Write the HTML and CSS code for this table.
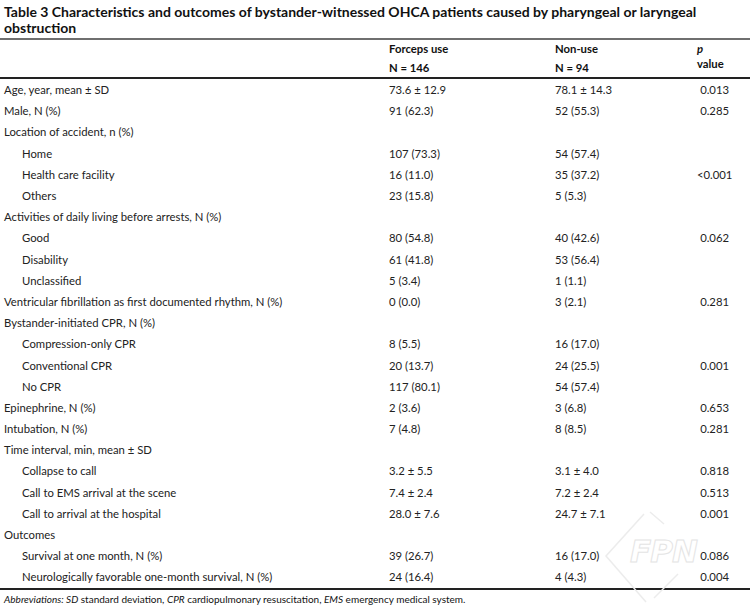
FILE: index.html
```html
<!DOCTYPE html>
<html>
<head>
<meta charset="utf-8">
<link rel="stylesheet" href="styles.css">
</head>
<body>
<div class="page">
  <h1 class="title">Table 3 Characteristics and outcomes of bystander-witnessed OHCA patients caused by pharyngeal or laryngeal obstruction</h1>
  <table class="tbl">
    <colgroup>
      <col class="c-label"><col class="c-f"><col class="c-n"><col class="c-p">
    </colgroup>
    <thead>
      <tr class="h1">
        <th></th>
        <th>Forceps use</th>
        <th>Non-use</th>
        <th rowspan="2" class="ph"><i>p</i><br>value</th>
      </tr>
      <tr class="h2">
        <th></th>
        <th>N = 146</th>
        <th>N = 94</th>
      </tr>
    </thead>
    <tbody>
      <tr><td>Age, year, mean ± SD</td><td>73.6 ± 12.9</td><td>78.1 ± 14.3</td><td class="pv">0.013</td></tr>
      <tr><td>Male, N (%)</td><td>91 (62.3)</td><td>52 (55.3)</td><td class="pv">0.285</td></tr>
      <tr><td>Location of accident, n (%)</td><td></td><td></td><td></td></tr>
      <tr><td class="ind">Home</td><td>107 (73.3)</td><td>54 (57.4)</td><td></td></tr>
      <tr><td class="ind">Health care facility</td><td>16 (11.0)</td><td>35 (37.2)</td><td class="pv">&lt;0.001</td></tr>
      <tr><td class="ind">Others</td><td>23 (15.8)</td><td>5 (5.3)</td><td></td></tr>
      <tr><td>Activities of daily living before arrests, N (%)</td><td></td><td></td><td></td></tr>
      <tr><td class="ind">Good</td><td>80 (54.8)</td><td>40 (42.6)</td><td class="pv">0.062</td></tr>
      <tr><td class="ind">Disability</td><td>61 (41.8)</td><td>53 (56.4)</td><td></td></tr>
      <tr><td class="ind">Unclassified</td><td>5 (3.4)</td><td>1 (1.1)</td><td></td></tr>
      <tr><td>Ventricular fibrillation as first documented rhythm, N (%)</td><td>0 (0.0)</td><td>3 (2.1)</td><td class="pv">0.281</td></tr>
      <tr><td>Bystander-initiated CPR, N (%)</td><td></td><td></td><td></td></tr>
      <tr><td class="ind">Compression-only CPR</td><td>8 (5.5)</td><td>16 (17.0)</td><td></td></tr>
      <tr><td class="ind">Conventional CPR</td><td>20 (13.7)</td><td>24 (25.5)</td><td class="pv">0.001</td></tr>
      <tr><td class="ind">No CPR</td><td>117 (80.1)</td><td>54 (57.4)</td><td></td></tr>
      <tr><td>Epinephrine, N (%)</td><td>2 (3.6)</td><td>3 (6.8)</td><td class="pv">0.653</td></tr>
      <tr><td>Intubation, N (%)</td><td>7 (4.8)</td><td>8 (8.5)</td><td class="pv">0.281</td></tr>
      <tr><td>Time interval, min, mean ± SD</td><td></td><td></td><td></td></tr>
      <tr><td class="ind">Collapse to call</td><td>3.2 ± 5.5</td><td>3.1 ± 4.0</td><td class="pv">0.818</td></tr>
      <tr><td class="ind">Call to EMS arrival at the scene</td><td>7.4 ± 2.4</td><td>7.2 ± 2.4</td><td class="pv">0.513</td></tr>
      <tr><td class="ind">Call to arrival at the hospital</td><td>28.0 ± 7.6</td><td>24.7 ± 7.1</td><td class="pv">0.001</td></tr>
      <tr><td>Outcomes</td><td></td><td></td><td></td></tr>
      <tr><td class="ind">Survival at one month, N (%)</td><td>39 (26.7)</td><td>16 (17.0)</td><td class="pv">0.086</td></tr>
      <tr><td class="ind">Neurologically favorable one-month survival, N (%)</td><td>24 (16.4)</td><td>4 (4.3)</td><td class="pv">0.004</td></tr>
    </tbody>
  </table>
  <p class="foot"><i>Abbreviations: SD</i> standard deviation, <i>CPR</i> cardiopulmonary resuscitation, <i>EMS</i> emergency medical system.</p>
  <svg class="wm" width="120" height="100" viewBox="0 0 120 100" aria-hidden="true">
    <polyline points="44,4 6,46 46,92" fill="none" stroke="#ececec" stroke-width="1.5"/>
    <polyline points="50,2 64,14" fill="none" stroke="#ececec" stroke-width="1.5"/>
    <polyline points="54,88 78,64" fill="none" stroke="#ececec" stroke-width="1.5"/>
    <text x="30" y="52" class="wmt">FPN</text>
  </svg>
</div>
</body>
</html>
```
FILE: styles.css
```css
html, body {
  margin: 0;
  padding: 0;
  background: #ffffff;
}

.page {
  position: relative;
  width: 750px;
  height: 611px;
  font-family: Lato, "Open Sans", sans-serif;
  color: #222222;
}

.title {
  margin: 0;
  padding: 4px 30px 2px 4px;
  font-size: 14px;
  line-height: 16px;
  font-weight: 700;
  color: #111111;
  border-bottom: 2px solid #6f6f6f;
}

.tbl {
  width: 750px;
  border-collapse: collapse;
  table-layout: fixed;
  font-size: 11.3px;
}

.c-label { width: 385px; }
.c-f { width: 166px; }
.c-n { width: 142px; }
.c-p { width: 57px; }

.tbl th {
  text-align: left;
  font-weight: 700;
  padding: 0 4px;
  color: #111111;
}

.tbl thead tr.h1 th {
  height: 18px;
  line-height: 18px;
}

.tbl thead tr.h2 th {
  height: 19px;
  line-height: 19px;
  border-bottom: 2px solid #222222;
}

.tbl thead tr.h1 th.ph {
  vertical-align: top;
  line-height: 15px;
  padding-top: 1px;
  border-bottom: 2px solid #222222;
}

.tbl td {
  padding: 0 4px;
  height: 21.2px;
  line-height: 21px;
  white-space: nowrap;
}

.tbl td.ind {
  padding-left: 22px;
}

.tbl td.pv {
  text-align: right;
  padding-right: 21px;
}

.tbl tbody tr:last-child td {
  border-bottom: 2px solid #222222;
}

.foot {
  margin: 0;
  padding: 2px 4px 0 4px;
  font-size: 10px;
  line-height: 14px;
  color: #111111;
}

.wm {
  position: absolute;
  left: 600px;
  top: 510px;
}

.wmt {
  font-family: "DejaVu Sans", sans-serif;
  font-size: 31px;
  font-style: italic;
  font-weight: 700;
  fill: #ffffff;
  stroke: #e4e4e4;
  stroke-width: 1;
  letter-spacing: -1px;
}
```
